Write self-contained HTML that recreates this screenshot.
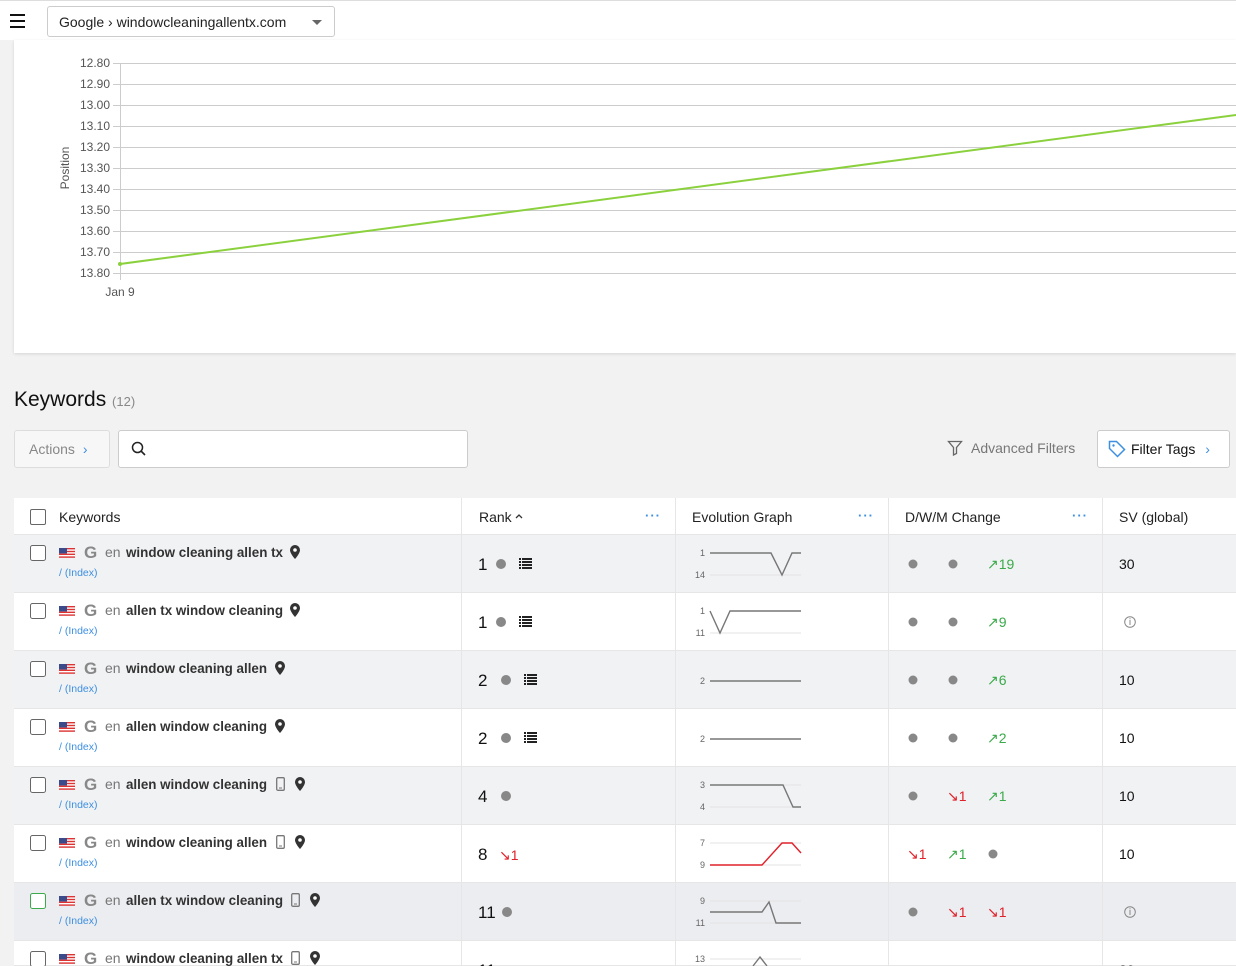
<!DOCTYPE html>
<html><head><meta charset="utf-8"><style>
*{box-sizing:border-box;margin:0;padding:0}
html,body{width:1236px;height:966px;overflow:hidden}
body{background:#f2f2f2;font-family:"Liberation Sans",sans-serif;position:relative;color:#222}
.a{position:absolute}
.top{left:0;top:0;width:1236px;height:40px;background:#fff;border-top:1px solid #ddd}
.sel{left:47px;top:6px;width:288px;height:31px;border:1px solid #ccc;border-radius:3px;font-size:14px;padding:7px 11px;color:#222}
.card{left:14px;top:40px;width:1222px;height:313px;background:#fff;box-shadow:0 1px 3px rgba(0,0,0,.12)}
.row{left:14px;width:1222px;height:58px;border-bottom:1px solid #e6e6e6}
.cb{width:16px;height:16px;border:1px solid #666;border-radius:2px;background:#fff}
.vl{width:1px;background:#e6e6e6}
.hd{font-size:14px;color:#222}
.more{color:#3d8fe0;font-size:13px;font-weight:bold;letter-spacing:1px}
</style></head><body>
<div class="a top"></div>
<div class="a" style="left:10px;top:14px;width:15px;height:2px;background:#111"></div>
<div class="a" style="left:10px;top:20px;width:15px;height:2px;background:#111"></div>
<div class="a" style="left:10px;top:26px;width:15px;height:2px;background:#111"></div>
<div class="a sel">Google › windowcleaningallentx.com</div>
<div class="a" style="left:312px;top:20px;border-left:5px solid transparent;border-right:5px solid transparent;border-top:5px solid #666"></div>
<div class="a card"></div>
<svg class="a" style="left:0;top:40px" width="1236" height="313">
<g font-size="12" fill="#555" text-anchor="end" font-family="Liberation Sans">
<text x="110" y="27">12.80</text><text x="110" y="48">12.90</text><text x="110" y="69">13.00</text><text x="110" y="90">13.10</text><text x="110" y="111">13.20</text><text x="110" y="132">13.30</text><text x="110" y="153">13.40</text><text x="110" y="174">13.50</text><text x="110" y="195">13.60</text><text x="110" y="216">13.70</text><text x="110" y="237">13.80</text>
</g>
<g stroke="#ccc" stroke-width="1">
<line x1="113" y1="23.5" x2="1236" y2="23.5"/><line x1="113" y1="44.5" x2="1236" y2="44.5"/><line x1="113" y1="65.5" x2="1236" y2="65.5"/><line x1="113" y1="86.5" x2="1236" y2="86.5"/><line x1="113" y1="107.5" x2="1236" y2="107.5"/><line x1="113" y1="128.5" x2="1236" y2="128.5"/><line x1="113" y1="149.5" x2="1236" y2="149.5"/><line x1="113" y1="170.5" x2="1236" y2="170.5"/><line x1="113" y1="191.5" x2="1236" y2="191.5"/><line x1="113" y1="212.5" x2="1236" y2="212.5"/><line x1="113" y1="233.5" x2="1236" y2="233.5"/>
<line x1="120.5" y1="23" x2="120.5" y2="240"/>
</g>
<text x="120" y="256" font-size="12" fill="#555" text-anchor="middle" font-family="Liberation Sans">Jan 9</text>
<text transform="translate(69,128) rotate(-90)" font-size="12" fill="#555" text-anchor="middle" font-family="Liberation Sans">Position</text>
<line x1="120" y1="224" x2="1236" y2="75" stroke="#8bd13e" stroke-width="2"/>
<circle cx="120" cy="224" r="2" fill="#8bd13e"/>
</svg>
<div class="a" style="left:14px;top:388px;font-size:21px;color:#111">Keywords <span style="font-size:13px;color:#888">(12)</span></div>
<div class="a" style="left:14px;top:430px;width:96px;height:38px;background:#f7f7f7;border:1px solid #ddd;border-radius:3px;font-size:14px;color:#888;padding:10px 14px">Actions <span style="color:#3d8fe0;margin-left:4px">›</span></div>
<div class="a" style="left:118px;top:430px;width:350px;height:38px;background:#fff;border:1px solid #ccc;border-radius:3px"></div>
<svg class="a" style="left:131px;top:441px" width="16" height="16"><circle cx="6.5" cy="6.5" r="5" stroke="#222" stroke-width="1.5" fill="none"/><line x1="10" y1="10" x2="14" y2="14" stroke="#222" stroke-width="1.6"/></svg>
<svg class="a" style="left:947px;top:440px" width="16" height="16"><path d="M1.5 1.5h13l-5 6v6l-3 1.5v-7.5z" fill="none" stroke="#666" stroke-width="1.3"/></svg>
<div class="a" style="left:971px;top:440px;font-size:14px;color:#777">Advanced Filters</div>
<div class="a" style="left:1097px;top:430px;width:133px;height:38px;background:#fff;border:1px solid #ccc;border-radius:3px;font-size:14px;color:#111;padding:10px 0 0 33px">Filter Tags <span style="color:#3d8fe0;margin-left:6px">›</span></div>
<svg class="a" style="left:1108px;top:440px" width="18" height="18"><path d="M1.5 1.5h7l8 8-7 7-8-8z" fill="none" stroke="#3d8fe0" stroke-width="1.5"/><circle cx="5.5" cy="5.5" r="1.2" fill="#3d8fe0"/></svg>

<div class="a" style="left:14px;top:498px;width:1222px;height:37px;background:#fff;border-bottom:1px solid #e6e6e6"></div>
<div class="a cb" style="left:30px;top:509px"></div>
<div class="a hd" style="left:59px;top:509px">Keywords</div>
<div class="a hd" style="left:479px;top:509px">Rank</div>
<svg class="a" style="left:514px;top:512px" width="10" height="8"><polyline points="2,6 5,3 8,6" fill="none" stroke="#333" stroke-width="1.3"/></svg>
<div class="a more" style="left:645px;top:508px">···</div>
<div class="a hd" style="left:692px;top:509px">Evolution Graph</div>
<div class="a more" style="left:858px;top:508px">···</div>
<div class="a hd" style="left:905px;top:509px">D/W/M Change</div>
<div class="a more" style="left:1072px;top:508px">···</div>
<div class="a hd" style="left:1119px;top:509px">SV (global)</div>

<div class="a row" style="top:535px;background:#f1f2f4"></div>
<div class="a row" style="top:593px;background:#fff"></div>
<div class="a row" style="top:651px;background:#f1f2f4"></div>
<div class="a row" style="top:709px;background:#fff"></div>
<div class="a row" style="top:767px;background:#f1f2f4"></div>
<div class="a row" style="top:825px;background:#fff"></div>
<div class="a row" style="top:883px;background:#ecedf0"></div>
<div class="a row" style="top:941px;background:#fff;height:25px"></div>
<div class="a vl" style="left:461px;top:498px;height:468px"></div>
<div class="a vl" style="left:675px;top:498px;height:468px"></div>
<div class="a vl" style="left:888px;top:498px;height:468px"></div>
<div class="a vl" style="left:1102px;top:498px;height:468px"></div>

<svg class="a" style="left:0;top:535px" width="461" height="431" font-family="Liberation Sans">
<defs>
<g id="flag"><rect width="16" height="10" fill="#fff"/><rect y="0" width="16" height="1.4" fill="#d33"/><rect y="2.8" width="16" height="1.4" fill="#d33"/><rect y="5.6" width="16" height="1.4" fill="#d33"/><rect y="8.4" width="16" height="1.4" fill="#d33"/><rect width="8" height="5.5" fill="#3b4a8a"/></g>
<g id="pin"><path d="M5 0a5 5 0 0 1 5 5c0 3.5-5 9-5 9s-5-5.5-5-9a5 5 0 0 1 5-5z" fill="#333"/><circle cx="5" cy="5" r="1.8" fill="#fff"/></g>
<g id="ph"><rect x="0.7" y="0.7" width="7.6" height="12.6" rx="1.2" fill="none" stroke="#777" stroke-width="1.3"/><line x1="3" y1="11" x2="6" y2="11" stroke="#777"/></g>
<g id="gg"><text x="84" y="23" font-size="17" font-weight="bold" fill="#888">G</text><text x="105" y="22" fill="#777" font-size="14">en</text></g>
</defs>
<g font-size="14">
<g><rect x="30.5" y="10.5" width="15" height="15" rx="2" fill="#fff" stroke="#666"/><use href="#flag" x="59" y="13"/><use href="#gg"/><text x="126" y="22" font-weight="bold" fill="#333" textLength="157" lengthAdjust="spacingAndGlyphs">window cleaning allen tx</text><use href="#pin" x="290" y="10"/><text x="59" y="41" font-size="10.5" fill="#3d8fe0">/ (Index)</text></g>
<g transform="translate(0,58)"><rect x="30.5" y="10.5" width="15" height="15" rx="2" fill="#fff" stroke="#666"/><use href="#flag" x="59" y="13"/><use href="#gg"/><text x="126" y="22" font-weight="bold" fill="#333" textLength="157" lengthAdjust="spacingAndGlyphs">allen tx window cleaning</text><use href="#pin" x="290" y="10"/><text x="59" y="41" font-size="10.5" fill="#3d8fe0">/ (Index)</text></g>
<g transform="translate(0,116)"><rect x="30.5" y="10.5" width="15" height="15" rx="2" fill="#fff" stroke="#666"/><use href="#flag" x="59" y="13"/><use href="#gg"/><text x="126" y="22" font-weight="bold" fill="#333" textLength="141" lengthAdjust="spacingAndGlyphs">window cleaning allen</text><use href="#pin" x="275" y="10"/><text x="59" y="41" font-size="10.5" fill="#3d8fe0">/ (Index)</text></g>
<g transform="translate(0,174)"><rect x="30.5" y="10.5" width="15" height="15" rx="2" fill="#fff" stroke="#666"/><use href="#flag" x="59" y="13"/><use href="#gg"/><text x="126" y="22" font-weight="bold" fill="#333" textLength="141" lengthAdjust="spacingAndGlyphs">allen window cleaning</text><use href="#pin" x="275" y="10"/><text x="59" y="41" font-size="10.5" fill="#3d8fe0">/ (Index)</text></g>
<g transform="translate(0,232)"><rect x="30.5" y="10.5" width="15" height="15" rx="2" fill="#fff" stroke="#666"/><use href="#flag" x="59" y="13"/><use href="#gg"/><text x="126" y="22" font-weight="bold" fill="#333" textLength="141" lengthAdjust="spacingAndGlyphs">allen window cleaning</text><use href="#ph" x="276" y="10"/><use href="#pin" x="295" y="10"/><text x="59" y="41" font-size="10.5" fill="#3d8fe0">/ (Index)</text></g>
<g transform="translate(0,290)"><rect x="30.5" y="10.5" width="15" height="15" rx="2" fill="#fff" stroke="#666"/><use href="#flag" x="59" y="13"/><use href="#gg"/><text x="126" y="22" font-weight="bold" fill="#333" textLength="141" lengthAdjust="spacingAndGlyphs">window cleaning allen</text><use href="#ph" x="276" y="10"/><use href="#pin" x="295" y="10"/><text x="59" y="41" font-size="10.5" fill="#3d8fe0">/ (Index)</text></g>
<g transform="translate(0,348)"><rect x="30.5" y="10.5" width="15" height="15" rx="2" fill="#fff" stroke="#3aaa4a"/><use href="#flag" x="59" y="13"/><use href="#gg"/><text x="126" y="22" font-weight="bold" fill="#333" textLength="157" lengthAdjust="spacingAndGlyphs">allen tx window cleaning</text><use href="#ph" x="291" y="10"/><use href="#pin" x="310" y="10"/><text x="59" y="41" font-size="10.5" fill="#3d8fe0">/ (Index)</text></g>
<g transform="translate(0,406)"><rect x="30.5" y="10.5" width="15" height="15" rx="2" fill="#fff" stroke="#666"/><use href="#flag" x="59" y="13"/><use href="#gg"/><text x="126" y="22" font-weight="bold" fill="#333" textLength="157" lengthAdjust="spacingAndGlyphs">window cleaning allen tx</text><use href="#ph" x="291" y="10"/><use href="#pin" x="310" y="10"/></g>
</g>
</svg>

<svg class="a" style="left:461px;top:535px" width="775" height="431" font-family="Liberation Sans">
<defs>
<g id="lst" fill="#222"><rect x="0" y="0" width="2" height="2"/><rect x="3" y="0" width="10" height="2"/><rect x="0" y="3" width="2" height="2"/><rect x="3" y="3" width="10" height="2"/><rect x="0" y="6" width="2" height="2"/><rect x="3" y="6" width="10" height="2"/><rect x="0" y="9" width="2" height="2"/><rect x="3" y="9" width="10" height="2"/></g>
<g id="info"><circle cx="6" cy="6" r="5.3" fill="none" stroke="#888"/><line x1="6" y1="4" x2="6" y2="9" stroke="#888"/><circle cx="6" cy="2.8" r=".6" fill="#888"/></g>
</defs>
<g font-size="17" fill="#111">
<text x="17" y="35">1</text><circle cx="40" cy="29" r="5" fill="#888"/><use href="#lst" x="58" y="23"/>
<text x="17" y="93">1</text><circle cx="40" cy="87" r="5" fill="#888"/><use href="#lst" x="58" y="81"/>
<text x="17" y="151">2</text><circle cx="45" cy="145" r="5" fill="#888"/><use href="#lst" x="63" y="139"/>
<text x="17" y="209">2</text><circle cx="45" cy="203" r="5" fill="#888"/><use href="#lst" x="63" y="197"/>
<text x="17" y="267">4</text><circle cx="45" cy="261" r="5" fill="#888"/>
<text x="17" y="325">8</text><text x="38" y="325" font-size="14" fill="#e0202a">↘1</text>
<text x="17" y="383">11</text><circle cx="46" cy="377" r="5" fill="#888"/>
<text x="17" y="441">11</text>
</g>
<g font-size="9" fill="#666" text-anchor="end">
<text x="244" y="21">1</text><text x="244" y="43">14</text>
<text x="244" y="79">1</text><text x="244" y="101">11</text>
<text x="244" y="149">2</text>
<text x="244" y="207">2</text>
<text x="244" y="253">3</text><text x="244" y="275">4</text>
<text x="244" y="311">7</text><text x="244" y="333">9</text>
<text x="244" y="369">9</text><text x="244" y="391">11</text>
<text x="244" y="427">13</text>
</g>
<g stroke="#e3e3e3" stroke-width="1">
<line x1="249" y1="40" x2="340" y2="40"/><line x1="249" y1="98" x2="340" y2="98"/><line x1="249" y1="272" x2="340" y2="272"/><line x1="249" y1="330" x2="340" y2="330"/><line x1="249" y1="388" x2="340" y2="388"/><line x1="249" y1="424" x2="340" y2="424"/>
<line x1="249" y1="250" x2="340" y2="250"/><line x1="249" y1="308" x2="340" y2="308"/><line x1="249" y1="366" x2="340" y2="366"/>
</g>
<g fill="none" stroke="#777" stroke-width="1.4">
<polyline points="249,18 310,18 321,40 331,18 340,18"/>
<polyline points="249,76 259,98 269,76 340,76"/>
<polyline points="249,146 340,146"/>
<polyline points="249,204 340,204"/>
<polyline points="249,250 322,250 332,272 340,272"/>
<polyline points="249,377 301,377 308,367 315,388 340,388"/>
<polyline points="292,431 299,422 306,431"/>
</g>
<polyline points="249,330 301,330 321,308 331,308 340,318" fill="none" stroke="#e0202a" stroke-width="1.4"/>
<g font-size="14">
<circle cx="452" cy="29" r="4.5" fill="#888"/><circle cx="492" cy="29" r="4.5" fill="#888"/><text x="526" y="34" fill="#3aaa4a">↗19</text>
<circle cx="452" cy="87" r="4.5" fill="#888"/><circle cx="492" cy="87" r="4.5" fill="#888"/><text x="526" y="92" fill="#3aaa4a">↗9</text>
<circle cx="452" cy="145" r="4.5" fill="#888"/><circle cx="492" cy="145" r="4.5" fill="#888"/><text x="526" y="150" fill="#3aaa4a">↗6</text>
<circle cx="452" cy="203" r="4.5" fill="#888"/><circle cx="492" cy="203" r="4.5" fill="#888"/><text x="526" y="208" fill="#3aaa4a">↗2</text>
<circle cx="452" cy="261" r="4.5" fill="#888"/><text x="486" y="266" fill="#e0202a">↘1</text><text x="526" y="266" fill="#3aaa4a">↗1</text>
<text x="446" y="324" fill="#e0202a">↘1</text><text x="486" y="324" fill="#3aaa4a">↗1</text><circle cx="532" cy="319" r="4.5" fill="#888"/>
<circle cx="452" cy="377" r="4.5" fill="#888"/><text x="486" y="382" fill="#e0202a">↘1</text><text x="526" y="382" fill="#e0202a">↘1</text>
<text x="658" y="34" fill="#111">30</text>
<use href="#info" x="663" y="81"/>
<text x="658" y="150" fill="#111">10</text>
<text x="658" y="208" fill="#111">10</text>
<text x="658" y="266" fill="#111">10</text>
<text x="658" y="324" fill="#111">10</text>
<use href="#info" x="663" y="371"/>
<text x="658" y="440" fill="#111">20</text>
</g>
</svg>
</body></html>
